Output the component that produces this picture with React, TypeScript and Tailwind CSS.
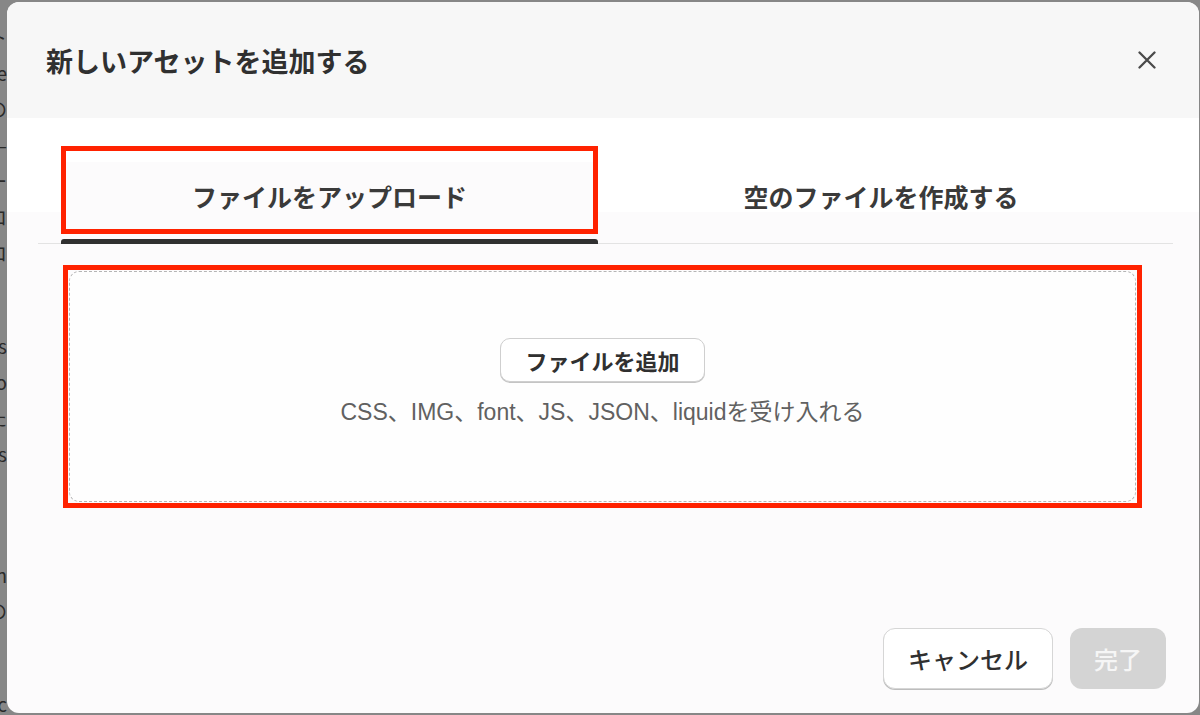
import { useState } from 'react'

const backdropLines = [
  'テキスト', 'ne', 'の', '—', 'ー', 'ロ', 'ロ', '', '', 'es', 'ro', 'た', 'ts', '', '', '', 'on', 'の', '', '', 'c',
]

function CloseIcon() {
  return (
    <svg width="18" height="18" viewBox="0 0 18 18" fill="none" stroke="#4a4a4a" strokeWidth="2.3" strokeLinecap="round">
      <path d="M1.5 1.5 L16.5 16.5 M16.5 1.5 L1.5 16.5" />
    </svg>
  )
}

export default function App() {
  const [tab, setTab] = useState<'upload' | 'empty'>('upload')

  return (
    <div className="flex h-[715px] w-[1200px] overflow-hidden bg-[#878787] pt-[2px] font-['Noto_Sans_CJK_JP','Noto_Sans',sans-serif] text-[#303030]">
      {/* Page behind the overlay */}
      <div className="flex w-[7px] shrink-0 flex-col gap-[14px] overflow-hidden pt-[24px] text-[19px] leading-[22px] text-[#2a2a2a]">
        {backdropLines.map((line, i) => (
          <div key={i} className="flex h-[22px] justify-end whitespace-nowrap">
            {line}
          </div>
        ))}
      </div>

      {/* Modal */}
      <div className="mr-px flex h-[711px] flex-1 flex-col overflow-hidden rounded-[12px] bg-[#fcfbfc]">
        {/* Header */}
        <div className="flex h-[116px] shrink-0 items-center justify-between bg-[#f7f7f7] pl-[39px] pr-[43px]">
          <h1 className="text-[27px] font-bold leading-none text-[#303030]">新しいアセットを追加する</h1>
          <button className="flex h-[18px] w-[18px] items-center justify-center">
            <CloseIcon />
          </button>
        </div>

        {/* Body */}
        <div className="flex flex-1 flex-col">
          {/* Tabs */}
          <div className="bg-[linear-gradient(to_bottom,#ffffff_94px,#fcfbfc_94px)] pt-[28px]">
            <div className="ml-[31px] mr-[26px] flex border-b border-[#e3e3e3] pl-[23px]">
              <button onClick={() => setTab('upload')} className="-mb-px flex w-[537px] flex-col">
                <div className="flex h-[88px] items-center justify-center border-[5px] border-[#ff2200] bg-[linear-gradient(to_bottom,#ffffff_11px,#fcfbfc_11px)] pt-[14px] text-[25px] font-bold text-[#3a3a3a]">
                  ファイルをアップロード
                </div>
                <div className={`mt-[5px] h-[5px] rounded-t-[3px] ${tab === 'upload' ? 'bg-[#303030]' : 'bg-transparent'}`} />
              </button>
              <button onClick={() => setTab('empty')} className="-mb-px flex flex-1 flex-col pr-[9px]">
                <div className="flex h-[88px] items-center justify-center pt-[14px] text-[25px] font-bold text-[#3a3a3a]">
                  空のファイルを作成する
                </div>
                <div className={`mt-[5px] h-[5px] rounded-t-[3px] ${tab === 'empty' ? 'bg-[#303030]' : 'bg-transparent'}`} />
              </button>
            </div>
          </div>

          {/* Drop zone */}
          <div className="ml-[56px] mt-[21px] h-[243px] w-[1079px] border-[5px] border-[#ff2200] p-px">
            <div className="flex h-full flex-col items-center rounded-[10px] border border-dashed border-[#b5b5b5] bg-[#fefefe] pt-[66px]">
              <button className="h-[44px] rounded-[10px] border border-[#cfcfcf] bg-white px-[24px] text-[22px] font-bold leading-none text-[#303030] shadow-[0_1px_0_#c4c4c4]">
                ファイルを追加
              </button>
              <p className="mt-[15px] font-['Liberation_Sans','Noto_Sans_CJK_JP',sans-serif] text-[23px] leading-[30px] text-[#616161]">
                CSS、IMG、font、JS、JSON、liquidを受け入れる
              </p>
            </div>
          </div>

          {/* Footer */}
          <div className="mt-auto flex justify-end gap-[17px] pb-[24px] pr-[33px]">
            <button className="h-[61px] w-[170px] rounded-[12px] border border-[#d6d6d6] bg-white text-[24px] font-medium text-[#303030] shadow-[0_1px_0_#bdbdbd]">
              キャンセル
            </button>
            <button disabled className="h-[61px] w-[96px] rounded-[12px] bg-[#d4d4d4] text-[24px] font-medium text-[#f6f6f6]">
              完了
            </button>
          </div>
        </div>
      </div>
    </div>
  )
}
